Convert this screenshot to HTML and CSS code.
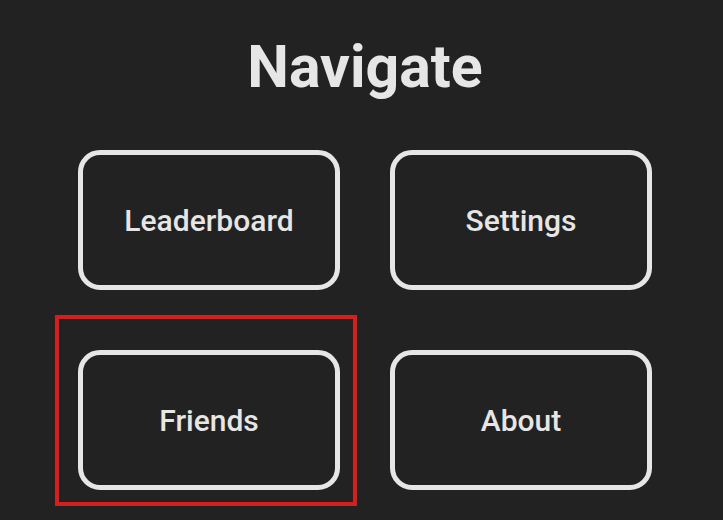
FILE: index.html
```html
<!DOCTYPE html>
<html>
<head>
<meta charset="utf-8">
<link rel="stylesheet" href="styles.css">
</head>
<body>
<main class="page">
  <h1 class="title">Navigate</h1>
  <nav class="grid">
    <div class="cell"><button class="nav-btn">Leaderboard</button></div>
    <div class="cell"><button class="nav-btn">Settings</button></div>
    <div class="cell"><button class="nav-btn">Friends</button><span class="highlight"></span></div>
    <div class="cell"><button class="nav-btn">About</button></div>
  </nav>
</main>
</body>
</html>
```
FILE: styles.css
```css
html, body {
  margin: 0;
  padding: 0;
  background: #222222;
}
body {
  font-family: Roboto, "Liberation Sans", sans-serif;
  color: #e6e6e6;
  width: 723px;
  height: 520px;
  overflow: hidden;
}
.page {
  display: flex;
  flex-direction: column;
  padding: 33px 71px 0 78px;
}
.title {
  margin: 0;
  font-size: 59px;
  font-weight: 700;
  line-height: 68px;
  text-align: center;
  color: #e6e6e6;
}
.grid {
  margin-top: 49px;
  display: grid;
  grid-template-columns: 262px 262px;
  column-gap: 50px;
  row-gap: 60px;
}
.cell {
  position: relative;
}
.nav-btn {
  display: flex;
  align-items: center;
  justify-content: center;
  width: 262px;
  height: 140px;
  box-sizing: border-box;
  background: transparent;
  border: 5px solid #e6e6e6;
  border-radius: 22px;
  color: #e6e6e6;
  font-family: Roboto, "Liberation Sans", sans-serif;
  font-size: 30px;
  font-weight: 500;
  padding: 0;
}
.highlight {
  position: absolute;
  left: -23px;
  top: -35px;
  width: 302px;
  height: 191px;
  box-sizing: border-box;
  border: 4px solid #d41f1f;
  pointer-events: none;
}
```
